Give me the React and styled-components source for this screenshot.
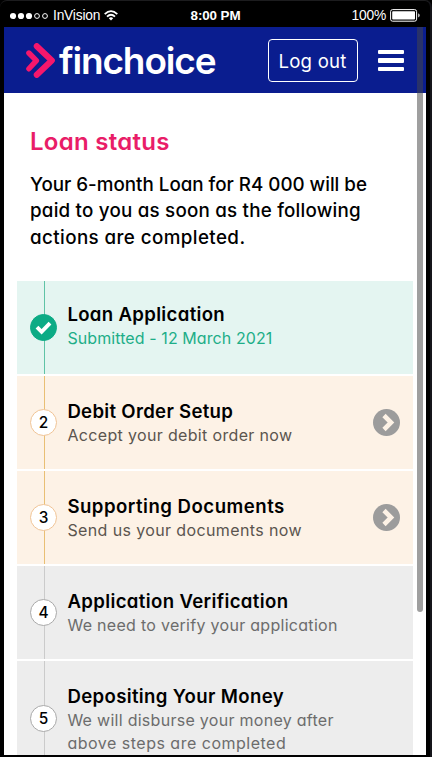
import React from "react";
import styled, { createGlobalStyle } from "styled-components";

const GlobalStyle = createGlobalStyle`
  * {
    box-sizing: border-box;
  }

  body {
    margin: 0;
    background: #000;
    overflow: hidden;
  }
`;

const tones = {
  done: { background: "#e4f5f1", line: "#5fc3a6", ring: "#0cab85", text: "#1dae88" },
  active: { background: "#fdf2e6", line: "#e9bf74", ring: "#f0c496", text: "#5b554f" },
  waiting: { background: "#ededed", line: "#cbcbcb", ring: "#a9a9a9", text: "#6c6c6c" },
};

const Phone = styled.div`
  width: 432px;
  height: 757px;
  padding: 0 4px 2px 4px;
  background: #000;
  border-top: 1px solid #1c1c1e;
  border-right: 2px solid #15151a;
  border-radius: 7px 7px 0 0;
  display: flex;
  flex-direction: column;
  font-family: Inter, "Liberation Sans", sans-serif;
  /* single-storey a */
  font-feature-settings: "cv11" 1;
  color: #000;
`;

const StatusBar = styled.div`
  flex: none;
  height: 26px;
  padding: 3px 5px 0 6px;
  display: grid;
  grid-template-columns: 1fr auto 1fr;
  align-items: center;
  color: #fff;
  font: 13.8px/20px "Liberation Sans", sans-serif;
`;

const StatusGroup = styled.div`
  display: flex;
  align-items: center;
  justify-content: ${(props) => (props.$end ? "flex-end" : "flex-start")};
  gap: 4px;
  letter-spacing: -0.2px;
`;

const Clock = styled.span`
  font-size: 13.4px;
  font-weight: bold;
  letter-spacing: -0.1px;
`;

const Screen = styled.main`
  position: relative;
  flex: 1;
  min-height: 0;
  background: #fff;
  overflow: hidden;
`;

const Header = styled.header`
  height: 66px;
  padding: 1px 22px 0 22px;
  display: flex;
  align-items: center;
  background: #0a1d8f;
`;

const Logo = styled.div`
  display: flex;
  align-items: center;
  flex: 1;
`;

const LogoText = styled.span`
  margin-left: 3px;
  color: #fff;
  font-size: 37px;
  font-weight: 600;
  line-height: 40px;
  letter-spacing: -1.15px;
`;

const LogoutButton = styled.button`
  flex: none;
  width: 90px;
  height: 43px;
  margin-right: 20.5px;
  padding: 0;
  border: 1.5px solid #fff;
  border-radius: 4px;
  background: none;
  color: #fff;
  font: 400 18.6px Inter, sans-serif;
  letter-spacing: 0.2px;
  white-space: nowrap;
`;

const MenuButton = styled.button`
  flex: none;
  width: 26px;
  padding: 0;
  border: 0;
  background: none;
  display: grid;
  gap: 4px;
`;

const MenuBar = styled.span`
  height: 4.4px;
  border-radius: 1px;
  background: #fff;
`;

const Intro = styled.section`
  height: 188px;
  padding: 33px 26px 0;
`;

const Title = styled.h1`
  margin: 0 0 14px;
  color: #e91d68;
  font-size: 24px;
  font-weight: 600;
  line-height: 32px;
  letter-spacing: 0.28px;
`;

const Message = styled.p`
  margin: 0;
  font-size: 18.8px;
  font-weight: 500;
  line-height: 26.3px;
`;

const Line = styled.span`
  display: block;
  width: max-content;
  white-space: nowrap;
  letter-spacing: ${(props) => props.$spacing || 0}px;
`;

const Steps = styled.div`
  margin: 0 13px;
  display: grid;
  gap: 2.4px;
`;

const StepRow = styled.div`
  height: ${(props) => (props.$tall ? 116 : 92.6)}px;
  padding-right: 13px;
  display: grid;
  grid-template-columns: 50.4px 1fr auto;
  align-items: center;
  background: ${(props) => tones[props.$tone].background};
`;

const Track = styled.div`
  height: 100%;
  padding-left: 13px;
  display: flex;
  align-items: center;
  background: linear-gradient(${(props) => tones[props.$tone].line}, ${(props) => tones[props.$tone].line}) 26.5px 0 / 1.4px 100% no-repeat;
`;

const Marker = styled.div`
  width: 27px;
  height: 27px;
  border: 1px solid ${(props) => tones[props.$tone].ring};
  border-radius: 50%;
  background: ${(props) => (props.$tone === "done" ? "#0cab85" : "#fff")};
  display: flex;
  align-items: center;
  justify-content: center;
  font-size: 15.4px;
  font-weight: 500;
`;

const StepText = styled.div`
  padding-bottom: ${(props) => (props.$tone === "done" ? 4.4 : 0)}px;
`;

const StepTitle = styled.h2`
  margin: 0;
  font-size: 18.6px;
  font-weight: 600;
  line-height: 26px;
`;

const StepNote = styled.div`
  color: ${(props) => tones[props.$tone].text};
  font-size: 16px;
  line-height: 22.6px;
`;

const ScrollThumb = styled.div`
  position: absolute;
  top: 0;
  right: 3px;
  width: 6px;
  height: 585px;
  border-radius: 0 0 3px 3px;
  background: rgba(70, 70, 70, 0.52);
`;

const steps = [
  { tone: "done", title: "Loan Application", spacing: 0.32, lines: [["Submitted - 12 March 2021", 0.09]] },
  { tone: "active", title: "Debit Order Setup", spacing: 0.3, lines: [["Accept your debit order now", 0.34]], link: true },
  { tone: "active", title: "Supporting Documents", spacing: 0.49, lines: [["Send us your documents now", 0.38]], link: true },
  { tone: "waiting", title: "Application Verification", spacing: 0.36, lines: [["We need to verify your application", 0.29]] },
  {
    tone: "waiting",
    title: "Depositing Your Money",
    spacing: 0.35,
    lines: [["We will disburse your money after", 0.28], ["above steps are completed", 0.5]],
  },
];

const SignalDots = () => (
  <svg width="39" height="8" viewBox="0 0 39 8">
    {[3, 11, 19].map((x) => <circle key={x} cx={x} cy="4" r="3.1" fill="#fff" />)}
    {[27, 35].map((x) => <circle key={x} cx={x} cy="4" r="2.4" fill="none" stroke="#fff" strokeWidth="1" />)}
  </svg>
);

const WifiIcon = () => (
  <svg width="14" height="11" viewBox="0 0 14 11" fill="none" stroke="#fff" strokeWidth="1.8">
    <path d="M.7 4.1Q7-1.8 13.3 4.1" />
    <path d="M3 6.6Q7 2.9 11 6.6" />
    <path d="M4.8 8.2Q7 6.4 9.2 8.2L7 10.6Z" fill="#fff" stroke="none" />
  </svg>
);

const BatteryIcon = () => (
  <svg width="31" height="13" viewBox="0 0 31 13">
    <rect x=".6" y=".6" width="26" height="11.6" rx="2" fill="none" stroke="#fff" strokeWidth="1" />
    <rect x="2.2" y="2.2" width="22.8" height="8.4" rx=".8" fill="#fff" />
    <path d="M28.3 4.3Q31 6.4 28.3 8.5Z" fill="#fff" />
  </svg>
);

const LogoMark = () => (
  <svg width="30" height="35" viewBox="0 0 30 35" fill="none" stroke="#f5176c" strokeLinecap="round" strokeLinejoin="round">
    <path d="M2.9 10L10.4 17.6L2.9 25.8" strokeWidth="5.4" />
    <path d="M10.8 3.2L25.8 17.5L10.8 31.8" strokeWidth="6.1" />
  </svg>
);

const CheckIcon = () => (
  <svg width="17" height="15" viewBox="0 0 17 15" fill="none" stroke="#fff" strokeWidth="3.9">
    <path d="M2 7.2L6.6 11.8L15 3.2" />
  </svg>
);

const ArrowIcon = () => (
  <svg width="27" height="27" viewBox="0 0 27 27" fill="none">
    <circle cx="13.5" cy="13.5" r="13.5" fill="#9c9c9c" />
    <path d="M11 6.5L18 13.5L11 20.5" stroke="#fdf2e6" strokeWidth="4.6" />
  </svg>
);

const Step = ({ step, number }) => (
  <StepRow $tone={step.tone} $tall={step.lines.length > 1}>
    <Track $tone={step.tone}>
      <Marker $tone={step.tone}>{step.tone === "done" ? <CheckIcon /> : number}</Marker>
    </Track>
    <StepText $tone={step.tone}>
      <StepTitle>
        <Line $spacing={step.spacing}>{step.title}</Line>
      </StepTitle>
      <StepNote $tone={step.tone}>
        {step.lines.map(([text, spacing]) => (
          <Line key={text} $spacing={spacing}>{text}</Line>
        ))}
      </StepNote>
    </StepText>
    {step.link && <ArrowIcon />}
  </StepRow>
);

const App = () => {
  return (
    <>
      <GlobalStyle />
      <Phone>
        <StatusBar>
          <StatusGroup>
            <SignalDots />
            <span>InVision</span>
            <WifiIcon />
          </StatusGroup>
          <Clock>8:00 PM</Clock>
          <StatusGroup $end>
            <span>100%</span>
            <BatteryIcon />
          </StatusGroup>
        </StatusBar>
        <Screen>
          <Header>
            <Logo>
              <LogoMark />
              <LogoText>finchoice</LogoText>
            </Logo>
            <LogoutButton>Log out</LogoutButton>
            <MenuButton aria-label="Menu">
              <MenuBar />
              <MenuBar />
              <MenuBar />
            </MenuButton>
          </Header>
          <Intro>
            <Title>Loan status</Title>
            <Message>
              <Line $spacing={-0.01}>Your 6-month Loan for R4 000 will be</Line>
              <Line $spacing={0.21}>paid to you as soon as the following</Line>
              <Line $spacing={0.4}>actions are completed.</Line>
            </Message>
          </Intro>
          <Steps>
            {steps.map((step, i) => (
              <Step key={step.title} step={step} number={i + 1} />
            ))}
          </Steps>
          <ScrollThumb />
        </Screen>
      </Phone>
    </>
  );
};

export default App;
